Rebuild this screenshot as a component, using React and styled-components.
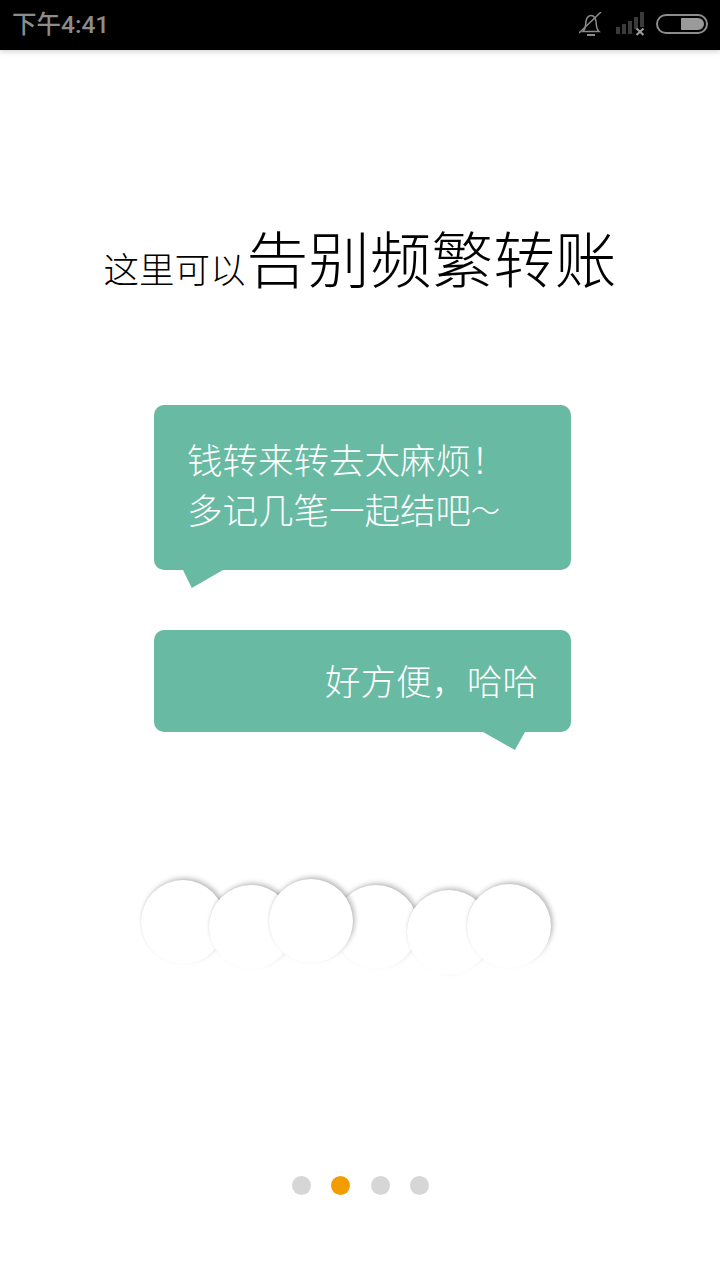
import styled, { createGlobalStyle } from "styled-components";

const GlobalStyle = createGlobalStyle`
  html, body {
    margin: 0;
    padding: 0;
    background: #fff;
  }
  body {
    font-family: "Noto Sans CJK SC", "Liberation Sans", sans-serif;
  }
`;

const circles = [
  { top: 1, left: 0, z: 1 },
  { top: 6, left: -16, z: 2 },
  { top: 0, left: -24, z: 3 },
  { top: 6, left: -19, z: 1 },
  { top: 11, left: -11, z: 2 },
  { top: 5, left: -24, z: 3 },
];

export default function App() {
  return (
    <Page>
      <GlobalStyle />
      <StatusBar>
        <Clock>下午4:41</Clock>
        <StatusIcons>
          <svg width="25" height="25" viewBox="0 0 25 25" fill="none" stroke="#8c8c8c" strokeWidth="1.5">
            <path d="M4 19.500c1.800-1.600 2.500-3.500 2.600-6.500C6.800 7 8.500 3.500 12 3.500s5 3.500 5.300 8.500c.2 3.500 1 6 2.700 7.500z" />
            <path d="M8 23h8" strokeWidth="2" />
            <path d="M0 21L22 0" />
          </svg>
          <svg width="28" height="24" viewBox="0 0 28 24">
            <rect x="0" y="15" width="4" height="7" fill="#3a3a3a" />
            <rect x="6" y="12" width="4" height="10" fill="#3a3a3a" />
            <rect x="12" y="9" width="4" height="13" fill="#3a3a3a" />
            <rect x="18" y="5" width="4" height="12" fill="#3a3a3a" />
            <rect x="24" y="0" width="4" height="15" fill="#3a3a3a" />
            <path d="M20.500 16.500l7 6.500M27.500 16.500l-7 6.500" stroke="#9a9a9a" strokeWidth="2.200" />
          </svg>
          <Battery>
            <BatteryFill />
          </Battery>
        </StatusIcons>
      </StatusBar>

      <Main>
        <Title>
          <TitleSmall>这里可以</TitleSmall>
          <TitleBig>告别频繁转账</TitleBig>
        </Title>

        <Bubble $tail="left">
          <BubbleText>钱转来转去太麻烦！</BubbleText>
          <BubbleText>
            多记几笔一起结吧<Tilde>～</Tilde>
          </BubbleText>
        </Bubble>
        <Bubble $tail="right" $short>
          <BubbleText $right>好方便，哈哈</BubbleText>
        </Bubble>

        <Circles>
          {circles.map((c, i) => (
            <Circle key={i} $top={c.top} $left={c.left} $z={c.z} />
          ))}
        </Circles>

        <Dots>
          <Dot />
          <Dot $active />
          <Dot />
          <Dot />
        </Dots>
      </Main>
    </Page>
  );
}

const Page = styled.div`
  width: 720px;
  height: 1280px;
  overflow: hidden;
  background: #fff;
  display: flex;
  flex-direction: column;
`;

const StatusBar = styled.div`
  height: 50px;
  flex: none;
  box-sizing: border-box;
  background: #000;
  box-shadow: 0 1px 6px rgba(0, 0, 0, 0.22);
  padding: 0 12px 2px 12px;
  display: flex;
  align-items: center;
  justify-content: space-between;
  position: relative;
`;

const Clock = styled.div`
  color: #8c8c8c;
  font-size: 24.5px;
  font-weight: 500;
  font-family: "Roboto", "Noto Sans CJK SC", sans-serif;
  line-height: 30px;
  margin-top: 1px;
`;

const StatusIcons = styled.div`
  display: flex;
  align-items: center;
  gap: 12px;
`;

const Battery = styled.div`
  width: 52px;
  height: 20px;
  box-sizing: border-box;
  border: 2px solid #8c8c8c;
  border-radius: 10px;
  padding: 2px;
  display: flex;
  justify-content: flex-end;
`;

const BatteryFill = styled.div`
  width: 23px;
  background: #9a9a9a;
  border-radius: 1px 6px 6px 1px;
`;

const Main = styled.div`
  flex: 1;
  display: flex;
  flex-direction: column;
  align-items: center;
`;

const Title = styled.div`
  margin-top: 163px;
  margin-bottom: 3px;
  height: 86px;
  display: flex;
  align-items: baseline;
  justify-content: center;
  color: #000;
  font-weight: 300;
  line-height: 86px;
`;

const TitleSmall = styled.span`
  font-size: 35.5px;
`;

const TitleBig = styled.span`
  font-size: 61.7px;
  margin-left: 1px;
`;

const Bubble = styled.div`
  box-sizing: border-box;
  width: 417px;
  height: ${(p) => (p.$short ? "102px" : "165px")};
  margin-top: ${(p) => (p.$short ? "60px" : "103px")};
  margin-left: 5px;
  padding: ${(p) => (p.$short ? "25px 33px" : "29px 33px")};
  background: #68baa3;
  border-radius: 10px;
  position: relative;

  &::after {
    content: "";
    position: absolute;
    top: 100%;
    ${(p) => (p.$tail === "left" ? "left: 29px;" : "right: 46px;")}
    width: ${(p) => (p.$tail === "left" ? "40px" : "42px")};
    height: 18px;
    background: #68baa3;
    clip-path: ${(p) =>
      p.$tail === "left"
        ? "polygon(0 0, 100% 0, 22% 100%)"
        : "polygon(0 0, 100% 0, 76% 100%)"};
  }
`;

const BubbleText = styled.div`
  color: #fff;
  font-size: 35.5px;
  font-weight: 300;
  line-height: 50px;
  white-space: nowrap;
  text-align: ${(p) => (p.$right ? "right" : "left")};
`;

const Tilde = styled.span`
  font-size: 29px;
  vertical-align: 2px;
`;

const Circles = styled.div`
  margin-top: 147px;
  margin-left: -19px;
  width: 420px;
  height: 96px;
  display: flex;
  align-items: flex-start;
  position: relative;

  /* the circles fade out towards the bottom */
  &::after {
    content: "";
    position: absolute;
    z-index: 5;
    left: -10px;
    right: -10px;
    top: 52px;
    height: 44px;
    background: linear-gradient(rgba(255, 255, 255, 0), rgba(255, 255, 255, 0.95) 95%);
  }
`;

const Circle = styled.div`
  flex: none;
  width: 84px;
  height: 84px;
  border-radius: 50%;
  background: #fff;
  margin-top: ${(p) => p.$top}px;
  margin-left: ${(p) => p.$left}px;
  position: relative;
  z-index: ${(p) => p.$z};
  box-shadow: 2px -2px 5px rgba(0, 0, 0, 0.26), 0 0 2px rgba(0, 0, 0, 0.08);
`;

const Dots = styled.div`
  margin-top: 201px;
  margin-left: 1px;
  display: flex;
  gap: 20.3px;
`;

const Dot = styled.div`
  width: 19px;
  height: 19px;
  border-radius: 50%;
  background: ${(p) => (p.$active ? "#f39c00" : "#d6d6d6")};
`;
